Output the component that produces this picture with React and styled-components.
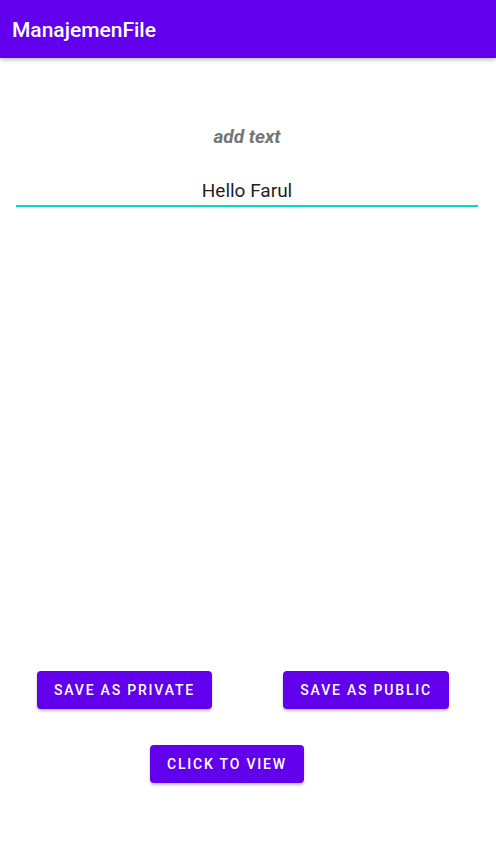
import styled, { createGlobalStyle } from "styled-components";

const GlobalStyle = createGlobalStyle`
  html, body {
    margin: 0;
    padding: 0;
    background: #ffffff;
    font-family: Roboto, "Noto Sans", sans-serif;
  }
`;

const App = () => {
  return (
    <Screen>
      <GlobalStyle />
      <AppBar>
        <Title>ManajemenFile</Title>
      </AppBar>

      <Content>
        <Label>add text</Label>
        <TextField>Hello Farul</TextField>
      </Content>

      <ButtonRow>
        <Button>Save as private</Button>
        <Button>Save as public</Button>
      </ButtonRow>

      <ViewRow>
        <Button>Click to view</Button>
      </ViewRow>
    </Screen>
  );
};

export default App;

// Styled Components

const Screen = styled.div`
  width: 496px;
  height: 867px;
  background: #ffffff;
  display: flex;
  flex-direction: column;
`;

const AppBar = styled.div`
  height: 58px;
  background-color: #6200ee;
  display: flex;
  align-items: center;
  padding-left: 12px;
  box-shadow: 0 2px 4px rgba(0, 0, 0, 0.25);
  position: relative;
  z-index: 1;
`;

const Title = styled.div`
  color: #ffffff;
  font-size: 21px;
  font-weight: 500;
  margin-top: 2px;
`;

const Content = styled.div`
  display: flex;
  flex-direction: column;
  align-items: center;
  padding: 0 18px 0 16px;
  margin-top: 67px;
`;

const Label = styled.div`
  color: #757575;
  font-size: 19px;
  font-weight: 700;
  font-style: italic;
  line-height: 24px;
`;

const TextField = styled.div`
  align-self: stretch;
  margin-top: 30px;
  text-align: center;
  color: #1f1f1f;
  font-size: 19px;
  line-height: 24px;
  padding-bottom: 2px;
  border-bottom: 2px solid #03dac5;
`;

const ButtonRow = styled.div`
  display: flex;
  justify-content: space-between;
  padding: 0 47px 0 37px;
  margin-top: 464px;
`;

const ViewRow = styled.div`
  display: flex;
  padding-left: 150px;
  margin-top: 36px;
`;

const Button = styled.div`
  height: 38px;
  padding: 0 17px;
  display: flex;
  align-items: center;
  justify-content: center;
  background-color: #6200ee;
  color: #ffffff;
  border-radius: 4px;
  font-size: 14px;
  font-weight: 500;
  letter-spacing: 1.8px;
  text-transform: uppercase;
  box-shadow: 0 2px 3px rgba(0, 0, 0, 0.25);
`;
